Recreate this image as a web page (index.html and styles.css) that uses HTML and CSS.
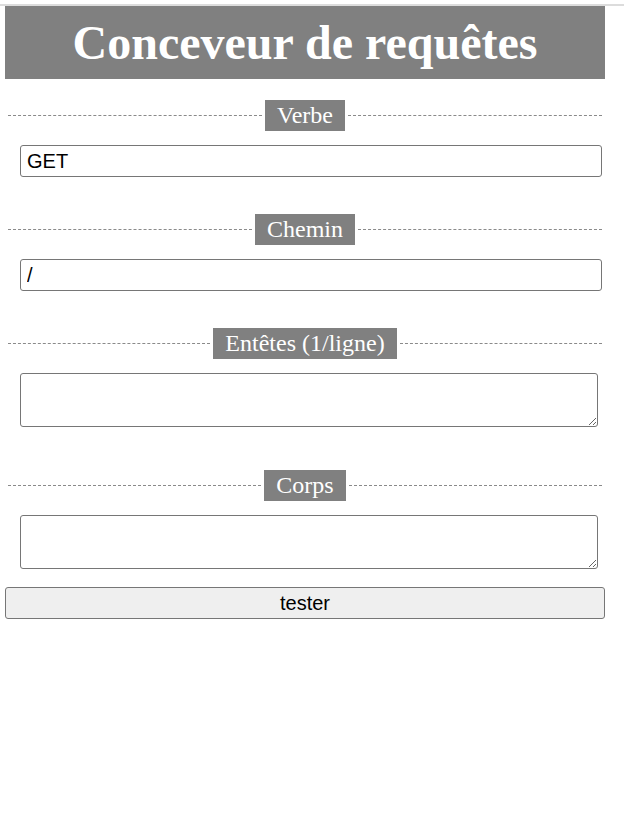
FILE: index.html
```html
<!DOCTYPE html>
<html lang="fr">
<head>
<meta charset="utf-8">
<title>Conceveur de requêtes</title>
<link rel="stylesheet" href="styles.css">
</head>
<body>
<div class="topline"></div>
<main class="page">
  <h1 class="title">Conceveur de requêtes</h1>
  <section class="group">
    <div class="legend"><span class="legend-text">Verbe</span></div>
    <div class="field"><input class="input" type="text" value="GET"></div>
  </section>
  <section class="group">
    <div class="legend"><span class="legend-text">Chemin</span></div>
    <div class="field"><input class="input" type="text" value="/"></div>
  </section>
  <section class="group">
    <div class="legend"><span class="legend-text">Entêtes (1/ligne)</span></div>
    <div class="field"><textarea class="area"></textarea></div>
  </section>
  <section class="group">
    <div class="legend"><span class="legend-text">Corps</span></div>
    <div class="field"><textarea class="area"></textarea></div>
  </section>
  <button class="btn" type="button">tester</button>
</main>
</body>
</html>
```

FILE: styles.css
```css
html, body {
  margin: 0;
  padding: 0;
  background: #fff;
}
.topline {
  margin-top: 4px;
  height: 2px;
  background: #dcdcdc;
}
.page {
  width: 600px;
  padding: 0 5px;
}
.title {
  margin: 0;
  height: 73px;
  background: #808080;
  color: #fff;
  font-family: "Liberation Serif", serif;
  font-weight: bold;
  font-size: 48px;
  line-height: 73px;
  text-align: center;
}
.group {
  margin: 0 3px;
}
.legend {
  display: flex;
  align-items: center;
  justify-content: center;
  margin-top: 21px;
  height: 31px;
}
.legend::before, .legend::after {
  content: "";
  flex: 1;
  border-top: 1px dashed #8a8a8a;
}
.legend-text {
  background: #808080;
  color: #fff;
  font-family: "Liberation Serif", serif;
  font-size: 24px;
  line-height: 31px;
  padding: 0 12px;
  margin: 0 3px;
}
.field {
  padding: 14px 0 0 12px;
}
.input {
  box-sizing: border-box;
  display: block;
  width: 582px;
  height: 32px;
  margin: 0;
  padding: 1px 6px;
  border: 1px solid #767676;
  border-radius: 3px;
  font-family: "Liberation Sans", Arial, sans-serif;
  font-size: 20px;
  color: #000;
}
.group + .group .legend {
  margin-top: 37px;
}
.area {
  box-sizing: border-box;
  display: block;
  width: 578px;
  height: 54px;
  margin: 0;
  padding: 2px;
  border: 1px solid #767676;
  border-radius: 3px;
  font-family: "Liberation Sans", Arial, sans-serif;
  font-size: 16px;
}
.group:nth-of-type(4) .legend {
  margin-top: 43px;
}
.btn {
  box-sizing: border-box;
  display: block;
  width: 600px;
  height: 32px;
  margin: 18px 0 0;
  border: 1px solid #767676;
  border-radius: 3px;
  background: #efefef;
  font-family: "Liberation Sans", Arial, sans-serif;
  font-size: 20px;
  color: #000;
}
```
